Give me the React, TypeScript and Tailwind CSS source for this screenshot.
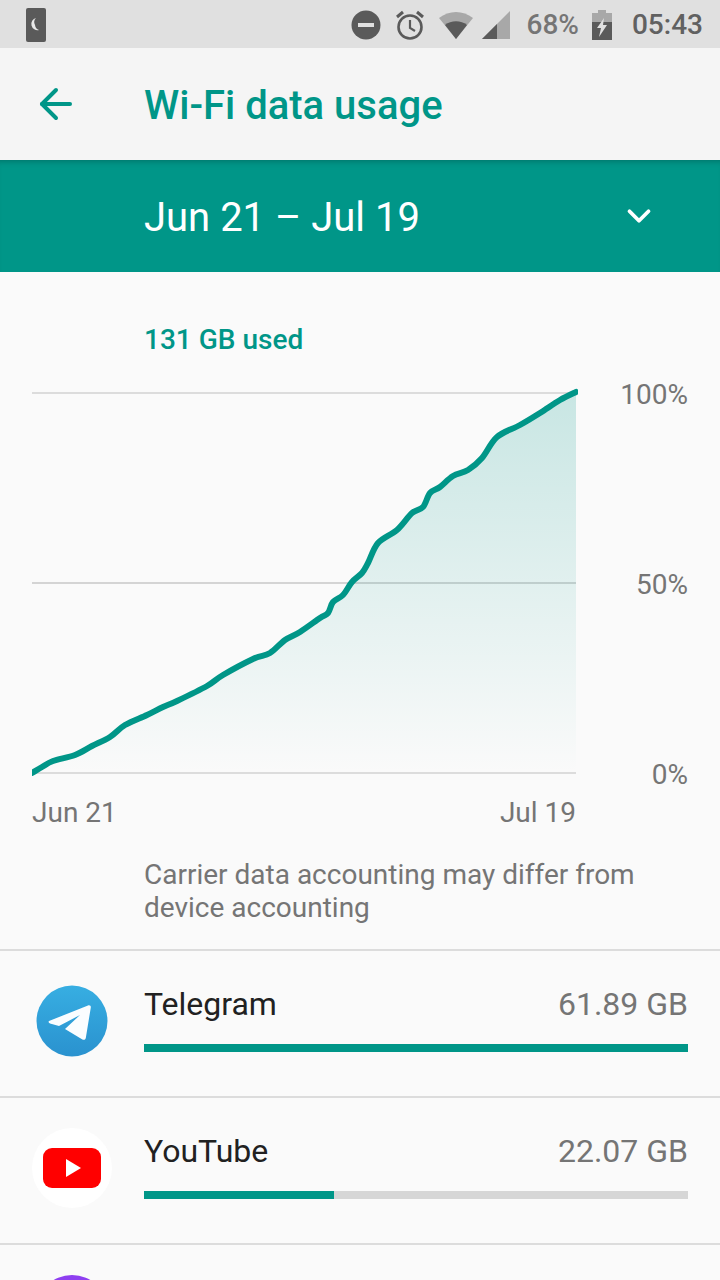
import { ArrowLeft, ChevronDown } from "lucide-react";

const points: [number, number][] = [
  [32, 773], [42, 767], [53, 761], [75, 755], [92, 746], [110, 737], [125, 725], [147, 715],
  [163, 707], [177, 701], [207, 686], [223, 675], [253, 659], [270, 653], [285, 640], [300, 632],
  [320, 618], [328, 613], [333, 602], [343, 595], [352, 582], [362, 573], [368, 563], [378, 543],
  [397, 530], [412, 513], [423, 507], [430, 493], [440, 487], [453, 476], [468, 470], [482, 458],
  [497, 437], [520, 425], [540, 413], [560, 400], [576, 392],
];

// smooth line through the points, offset into the svg's own box
function smoothPath(pts: [number, number][]) {
  const p = pts.map(([x, y]) => [x - 32, y - 384]);
  let d = `M${p[0][0]} ${p[0][1]}`;
  for (let i = 0; i < p.length - 1; i++) {
    const a = p[i - 1] ?? p[i];
    const b = p[i];
    const c = p[i + 1];
    const e = p[i + 2] ?? c;
    const c1x = b[0] + (c[0] - a[0]) / 6;
    const c1y = b[1] + (c[1] - a[1]) / 6;
    const c2x = c[0] - (e[0] - b[0]) / 6;
    const c2y = c[1] - (e[1] - b[1]) / 6;
    d += `C${c1x.toFixed(1)} ${c1y.toFixed(1)} ${c2x.toFixed(1)} ${c2y.toFixed(1)} ${c[0]} ${c[1]}`;
  }
  return d;
}

function StatusIcons() {
  return (
    <div className="flex items-center">
      <svg width="30" height="30" viewBox="0 0 30 30" className="mr-[13px]">
        <circle cx="15" cy="15" r="14.5" fill="#5a5a5a" />
        <rect x="7" y="13" width="16" height="4" fill="#e0e0e0" />
      </svg>
      <svg width="32" height="32" viewBox="0 0 32 32" className="mr-[12px]" fill="none" stroke="#5a5a5a">
        <circle cx="16" cy="18" r="11.5" strokeWidth="2.6" />
        <path d="M16 11v8l5 3" strokeWidth="2.2" />
        <path d="M3 8l6-5M29 8l-6-5" strokeWidth="3" />
      </svg>
      <svg width="36" height="28" viewBox="0 0 36 28" className="mr-[7px]">
        <path d="M1 7C11 -1 25 -1 35 7L18 28Z" fill="#a8a8a8" />
        <path d="M7 14C13 9 23 9 29 14L18 28Z" fill="#5a5a5a" />
      </svg>
      <svg width="30" height="30" viewBox="0 0 30 30" className="mr-[16px]">
        <path d="M1 29L29 1V29Z" fill="#a8a8a8" />
        <path d="M1 29L16 14V29Z" fill="#5a5a5a" />
      </svg>
      <span className="text-[28px] leading-none font-medium text-[#757575] mr-[13px]">68%</span>
      <svg width="20" height="30" viewBox="0 0 20 30" className="mr-[20px]">
        <path d="M6 0h8v3h6v9H0V3h6Z" fill="#a8a8a8" />
        <path d="M0 12h20v18H0Z" fill="#5a5a5a" />
        <path d="M12 8L5 18h4l-2 9 8-12h-4Z" fill="#e0e0e0" />
      </svg>
      <span className="text-[28px] leading-none font-medium text-[#616161]">05:43</span>
    </div>
  );
}

function TelegramIcon() {
  return (
    <svg width="72" height="72" viewBox="0 0 72 72">
      <defs>
        <linearGradient id="tg" x1="0" y1="0" x2="0" y2="1">
          <stop offset="0" stopColor="#37aee2" />
          <stop offset="1" stopColor="#2a92cf" />
        </linearGradient>
      </defs>
      <circle cx="36" cy="36" r="35.5" fill="url(#tg)" />
      <path
        d="M13 36L52 20.5C54 20 55 21 54.8 22.5L49.8 53C49.4 55 47.5 55.2 46.4 54.4L29 44L44 30L23 41L14 38.5C12.5 38 12.3 36.5 13 36Z"
        fill="#fafdff"
      />
    </svg>
  );
}

function YoutubeIcon() {
  return (
    <div className="w-[80px] h-[80px] rounded-full bg-white flex items-center justify-center">
      <svg width="58" height="40" viewBox="0 0 58 40">
        <rect x="0" y="0" width="58" height="40" rx="9" fill="#ff0000" />
        <path d="M23 11L38 20L23 29Z" fill="#ffffff" />
      </svg>
    </div>
  );
}

function AppRow({ name, size, percent, icon }: { name: string; size: string; percent: number; icon: React.ReactNode }) {
  return (
    <div className="flex h-[147px] border-b-2 border-[#dcdcdc] pr-[32px]">
      <div className="w-[144px] flex justify-center items-center pb-[6px]">{icon}</div>
      <div className="flex-1 pt-[33px]">
        <div className="flex justify-between items-center h-[40px] text-[32px] leading-none">
          <span className="text-[#212121]">{name}</span>
          <span className="text-[#757575]">{size}</span>
        </div>
        <div className="mt-[20px] h-[8px] bg-[#d6d6d6]">
          <div className="h-full bg-[#009688]" style={{ width: `${percent}%` }} />
        </div>
      </div>
    </div>
  );
}

export default function App() {
  const line = smoothPath(points);
  const area = `${line}L544 389L0 389Z`;
  return (
    <div className="w-[720px] h-[1280px] overflow-hidden bg-[#fafafa] font-['Roboto',sans-serif]">
      <div className="h-[48px] bg-[#e0e0e0] flex items-center justify-between pl-[26px] pr-[17px] pt-[1px]">
        <svg width="20" height="34" viewBox="0 0 20 34">
          <rect x="0" y="0" width="20" height="34" rx="2" fill="#5a5a5a" />
          <path d="M10 10a6 6 0 0 0 3 12a6 6 0 0 1-4-5a6 6 0 0 1 1-7Z" fill="#e8e8e8" />
        </svg>
        <StatusIcons />
      </div>

      <div className="h-[112px] bg-[#f5f5f5] flex items-center">
        <div className="w-[144px] pl-[32px]">
          <ArrowLeft size={48} strokeWidth={2} color="#009688" />
        </div>
        <span className="text-[40px] font-medium text-[#009688] leading-none pt-[4px]">Wi-Fi data usage</span>
      </div>

      <div className="h-[112px] bg-[#009688] flex items-center pl-[144px] pr-[62px] justify-between shadow-[inset_0_6px_6px_-5px_rgba(0,0,0,0.25)]">
        <span className="text-[40px] text-white leading-none pt-[4px]">Jun 21 – Jul 19</span>
        <ChevronDown size={38} strokeWidth={2.4} color="#ffffff" />
      </div>

      <div className="pt-[53px] pl-[144px] h-[112px]">
        <span className="block text-[28px] font-medium text-[#009688] leading-[30px]">131 GB used</span>
      </div>

      <div className="flex pl-[32px] pr-[32px] h-[392px]">
        <svg width="546" height="392" viewBox="0 0 546 392" className="shrink-0">
          <defs>
            <linearGradient id="fill" x1="0" y1="0" x2="0" y2="1">
              <stop offset="0" stopColor="#009688" stopOpacity="0.2" />
              <stop offset="1" stopColor="#009688" stopOpacity="0" />
            </linearGradient>
          </defs>
          <rect x="0" y="8" width="544" height="2" fill="#dcdcdc" />
          <rect x="0" y="198" width="544" height="2" fill="#d4d4d4" />
          <rect x="0" y="388" width="544" height="2" fill="#dcdcdc" />
          <path d={area} fill="url(#fill)" />
          <path d={line} fill="none" stroke="#009688" strokeWidth="6" strokeLinecap="round" strokeLinejoin="round" />
        </svg>
        <div className="flex-1 flex flex-col justify-between items-end text-[28px] leading-[30px] text-[#757575] h-[410px] -mt-[4px] shrink-0">
          <span>100%</span>
          <span>50%</span>
          <span>0%</span>
        </div>
      </div>

      <div className="w-[544px] ml-[32px] flex justify-between text-[28px] leading-[30px] text-[#757575] mt-[22px]">
        <span>Jun 21</span>
        <span>Jul 19</span>
      </div>

      <p className="pl-[144px] pr-[60px] mt-[30px] text-[28px] leading-[33px] text-[#757575] h-[91px]">
        Carrier data accounting may differ from device accounting
      </p>

      <div className="border-t-2 border-[#dcdcdc]">
        <AppRow name="Telegram" size="61.89 GB" percent={100} icon={<TelegramIcon />} />
        <AppRow name="YouTube" size="22.07 GB" percent={35} icon={<YoutubeIcon />} />
        <div className="flex justify-center w-[144px] pt-[30px]">
          <div className="w-[72px] h-[72px] rounded-full bg-[#8e3ff0]" />
        </div>
      </div>
    </div>
  );
}
